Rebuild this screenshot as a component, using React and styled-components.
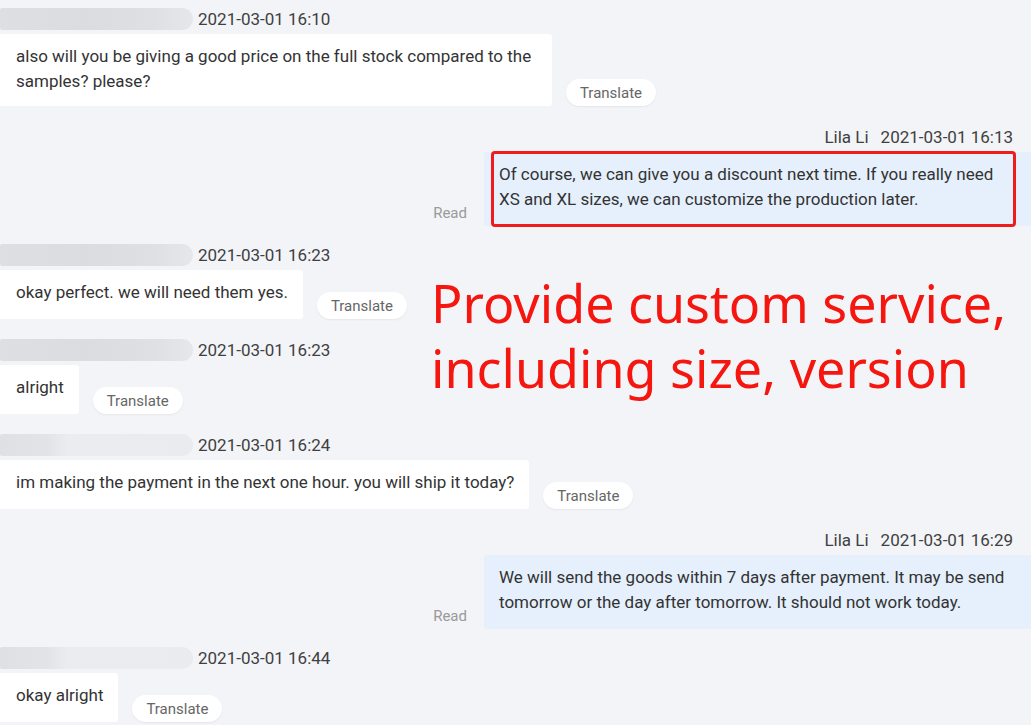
import React from "react";
import styled, { createGlobalStyle } from "styled-components";

const Global = createGlobalStyle`
  html, body { margin: 0; padding: 0; background: #f3f4f8; }
  body { font-family: Roboto, "Liberation Sans", sans-serif; }
`;

const Page = styled.div`
  position: relative;
  width: 1031px;
  height: 725px;
  overflow: hidden;
  background: #f3f4f8;
  padding-top: 8px;
  box-sizing: border-box;
  display: flex;
  flex-direction: column;
`;

const Group = styled.div`
  display: flex;
  flex-direction: column;
  align-items: ${(p) => (p.$mine ? "flex-end" : "flex-start")};
  margin-bottom: ${(p) => (p.$mine ? "18px" : "20px")};
`;

const Header = styled.div`
  display: flex;
  align-items: center;
  height: 22px;
  gap: ${(p) => (p.$mine ? "12px" : "5px")};
  padding-right: ${(p) => (p.$mine ? "18px" : "0")};
  margin-bottom: 4px;
  font-size: 17px;
  color: #404040;
`;

const NameBlur = styled.div`
  width: 193px;
  height: 22px;
  border-radius: 2px 11px 11px 2px;
  background: ${(p) =>
    p.$light
      ? "linear-gradient(90deg, #dfe0e4 0%, #e3e4e8 25%, #ebecef 35%, #eaebee 100%)"
      : "linear-gradient(90deg, #dedfe3 0%, #dbdce0 45%, #dfe0e4 80%, #e6e7ea 100%)"};
  filter: blur(0.6px);
`;

const Body = styled.div`
  display: flex;
  align-items: flex-end;
  gap: ${(p) => (p.$mine ? "17px" : "14px")};
`;

const Bubble = styled.div`
  position: relative;
  box-sizing: border-box;
  max-width: ${(p) => (p.$mine ? "547px" : "552px")};
  width: ${(p) => (p.$mine ? "547px" : "auto")};
  min-height: 49px;
  padding: ${(p) => (p.$mine ? "10px 14px 14px 15px" : "10px 15px 12px 16px")};
  background: ${(p) => (p.$mine ? "#e5f0fc" : "#ffffff")};
  color: #333;
  font-size: 17px;
  line-height: 25px;
  border-radius: ${(p) => (p.$mine ? "3px 0 0 3px" : "0 3px 3px 0")};
`;

const Highlight = styled.div`
  position: absolute;
  left: 7px;
  right: 15px;
  top: -1px;
  bottom: -1px;
  border: 3px solid #ee1c1c;
  border-radius: 4px;
  pointer-events: none;
`;

const TranslateButton = styled.button`
  width: 90px;
  height: 27px;
  margin-bottom: 0;
  border: none;
  border-radius: 14px;
  background: #ffffff;
  box-shadow: 0 1px 2px rgba(0, 0, 0, 0.06);
  color: #666;
  font-family: Roboto, "Liberation Sans", sans-serif;
  font-size: 15px;
  padding: 0;
`;

const ReadLabel = styled.span`
  font-size: 15px;
  line-height: 16px;
  color: #9a9a9a;
  margin-bottom: 5px;
`;

const Annotation = styled.div`
  position: absolute;
  left: 431px;
  top: 270px;
  color: #f4160f;
  font-family: "Noto Sans", "Open Sans", sans-serif;
  font-size: 52px;
  line-height: 65px;
`;

const messages = [
  { mine: false, time: "2021-03-01 16:10", text: "also will you be giving a good price on the full stock compared to the samples? please?" },
  { mine: true, time: "2021-03-01 16:13", text: "Of course, we can give you a discount next time. If you really need XS and XL sizes, we can customize the production later.", highlight: true },
  { mine: false, time: "2021-03-01 16:23", text: "okay perfect. we will need them yes." },
  { mine: false, time: "2021-03-01 16:23", text: "alright" },
  { mine: false, time: "2021-03-01 16:24", text: "im making the payment in the next one hour. you will ship it today?", light: true },
  { mine: true, time: "2021-03-01 16:29", text: "We will send the goods within 7 days after payment. It may be send tomorrow or the day after tomorrow. It should not work today." },
  { mine: false, time: "2021-03-01 16:44", text: "okay alright", light: true },
];

function Message({ m }) {
  return (
    <Group $mine={m.mine}>
      <Header $mine={m.mine}>
        {m.mine ? <span>Lila Li</span> : <NameBlur $light={m.light} />}
        <span>{m.time}</span>
      </Header>
      <Body $mine={m.mine}>
        {m.mine && <ReadLabel>Read</ReadLabel>}
        <Bubble $mine={m.mine}>
          {m.text}
          {m.highlight && <Highlight />}
        </Bubble>
        {!m.mine && <TranslateButton>Translate</TranslateButton>}
      </Body>
    </Group>
  );
}

export default function App() {
  return (
    <Page>
      <Global />
      {messages.map((m, i) => (
        <Message key={i} m={m} />
      ))}
      <Annotation>
        Provide custom service,
        <br />
        including size, version
      </Annotation>
    </Page>
  );
}
